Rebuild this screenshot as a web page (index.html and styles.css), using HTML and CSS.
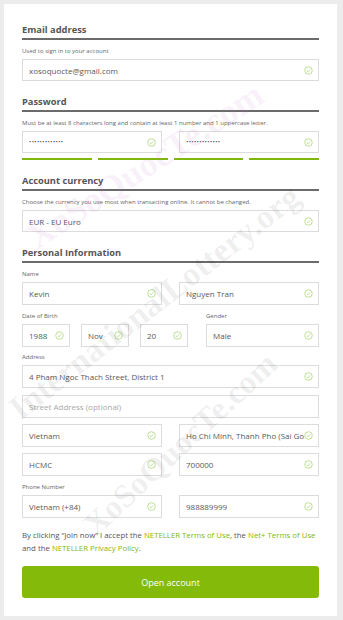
FILE: index.html
```html
<!DOCTYPE html>
<html lang="en">
<head>
<meta charset="utf-8">
<title>Open account</title>
<link rel="stylesheet" href="styles.css">
</head>
<body>
<main class="card">
  <section class="sec">
    <h2 class="sec-title">Email address</h2>
    <p class="hint">Used to sign in to your account</p>
    <div class="field"><input class="fi" type="text" value="xosoquocte@gmail.com" readonly><svg class="ok" viewBox="0 0 10 10"><circle cx="5" cy="5" r="4.2"/><path d="M3.1 5.1 4.5 6.4 6.9 3.8"/></svg></div>
  </section>

  <section class="sec">
    <h2 class="sec-title">Password</h2>
    <p class="hint">Must be at least 8 characters long and contain at least 1 number and 1 uppercase letter.</p>
    <div class="row2">
      <div class="field"><input class="fi pw" type="password" value="aaaaaaaaaaaaa" readonly><svg class="ok" viewBox="0 0 10 10"><circle cx="5" cy="5" r="4.2"/><path d="M3.1 5.1 4.5 6.4 6.9 3.8"/></svg></div>
      <div class="field"><input class="fi pw" type="password" value="aaaaaaaaaaaaa" readonly><svg class="ok" viewBox="0 0 10 10"><circle cx="5" cy="5" r="4.2"/><path d="M3.1 5.1 4.5 6.4 6.9 3.8"/></svg></div>
    </div>
    <div class="strength"><span></span><span></span><span></span><span></span></div>
  </section>

  <section class="sec">
    <h2 class="sec-title">Account currency</h2>
    <p class="hint">Choose the currency you use most when transacting online. It cannot be changed.</p>
    <div class="field"><input class="fi" type="text" value="EUR - EU Euro" readonly><svg class="ok" viewBox="0 0 10 10"><circle cx="5" cy="5" r="4.2"/><path d="M3.1 5.1 4.5 6.4 6.9 3.8"/></svg></div>
  </section>

  <section class="sec personal">
    <h2 class="sec-title">Personal Information</h2>

    <p class="lbl">Name</p>
    <div class="row2">
      <div class="field tall"><input class="fi" type="text" value="Kevin" readonly><svg class="ok" viewBox="0 0 10 10"><circle cx="5" cy="5" r="4.2"/><path d="M3.1 5.1 4.5 6.4 6.9 3.8"/></svg></div>
      <div class="field tall"><input class="fi" type="text" value="Nguyen Tran" readonly><svg class="ok" viewBox="0 0 10 10"><circle cx="5" cy="5" r="4.2"/><path d="M3.1 5.1 4.5 6.4 6.9 3.8"/></svg></div>
    </div>

    <div class="dob">
      <p class="lbl dob-l">Date of Birth</p>
      <p class="lbl gen-l">Gender</p>
      <div class="field tall"><input class="fi" type="text" value="1988" readonly><svg class="ok" viewBox="0 0 10 10"><circle cx="5" cy="5" r="4.2"/><path d="M3.1 5.1 4.5 6.4 6.9 3.8"/></svg></div>
      <div class="field tall"><input class="fi" type="text" value="Nov" readonly><svg class="ok" viewBox="0 0 10 10"><circle cx="5" cy="5" r="4.2"/><path d="M3.1 5.1 4.5 6.4 6.9 3.8"/></svg></div>
      <div class="field tall"><input class="fi" type="text" value="20" readonly><svg class="ok" viewBox="0 0 10 10"><circle cx="5" cy="5" r="4.2"/><path d="M3.1 5.1 4.5 6.4 6.9 3.8"/></svg></div>
      <div class="field tall gen"><input class="fi" type="text" value="Male" readonly><svg class="ok" viewBox="0 0 10 10"><circle cx="5" cy="5" r="4.2"/><path d="M3.1 5.1 4.5 6.4 6.9 3.8"/></svg></div>
    </div>

    <p class="lbl addr-l">Address</p>
    <div class="field tall"><input class="fi" type="text" value="4 Pham Ngoc Thach Street, District 1" readonly><svg class="ok" viewBox="0 0 10 10"><circle cx="5" cy="5" r="4.2"/><path d="M3.1 5.1 4.5 6.4 6.9 3.8"/></svg></div>
    <div class="field tall gap7"><input class="fi" type="text" placeholder="Street Address (optional)" readonly></div>
    <div class="row2 gap6">
      <div class="field tall"><input class="fi" type="text" value="Vietnam" readonly><svg class="ok" viewBox="0 0 10 10"><circle cx="5" cy="5" r="4.2"/><path d="M3.1 5.1 4.5 6.4 6.9 3.8"/></svg></div>
      <div class="field tall"><input class="fi" type="text" value="Ho Chi Minh, Thanh Pho (Sai Gon)" readonly><svg class="ok" viewBox="0 0 10 10"><circle cx="5" cy="5" r="4.2"/><path d="M3.1 5.1 4.5 6.4 6.9 3.8"/></svg></div>
    </div>
    <div class="row2 gap6">
      <div class="field tall"><input class="fi" type="text" value="HCMC" readonly><svg class="ok" viewBox="0 0 10 10"><circle cx="5" cy="5" r="4.2"/><path d="M3.1 5.1 4.5 6.4 6.9 3.8"/></svg></div>
      <div class="field tall"><input class="fi" type="text" value="700000" readonly><svg class="ok" viewBox="0 0 10 10"><circle cx="5" cy="5" r="4.2"/><path d="M3.1 5.1 4.5 6.4 6.9 3.8"/></svg></div>
    </div>

    <p class="lbl phone-l">Phone Number</p>
    <div class="row2">
      <div class="field tall"><input class="fi" type="text" value="Vietnam (+84)" readonly><svg class="ok" viewBox="0 0 10 10"><circle cx="5" cy="5" r="4.2"/><path d="M3.1 5.1 4.5 6.4 6.9 3.8"/></svg></div>
      <div class="field tall"><input class="fi" type="text" value="988889999" readonly><svg class="ok" viewBox="0 0 10 10"><circle cx="5" cy="5" r="4.2"/><path d="M3.1 5.1 4.5 6.4 6.9 3.8"/></svg></div>
    </div>
  </section>

  <p class="terms">By clicking “Join now” I accept the <a href="#">NETELLER Terms of Use</a>, the <a href="#">Net+ Terms of Use</a> and the <a href="#">NETELLER Privacy Policy</a>.</p>

  <button class="btn" type="button">Open account</button>

  <div class="wm wm1">XoSoQuocTe.com</div>
  <div class="wm wm2">InternationalLottery.org</div>
  <div class="wm wm3">XoSoQuocTe.com</div>
</main>
</body>
</html>
```

FILE: styles.css
```css
* { box-sizing: border-box; }

html, body {
  margin: 0;
  padding: 0;
  background: #ececec;
}

body {
  padding: 4px 6px 3px 4px;
  font-family: "Open Sans", "Liberation Sans", sans-serif;
  color: #555;
}

.card {
  position: relative;
  overflow: hidden;
  background: #fff;
  padding: 18px 18px 18px 18px;
}

.sec { margin: 0 0 13px 0; }

.sec-title {
  margin: 0;
  font-size: 9.3px;
  font-weight: 700;
  line-height: 15px;
  color: #555;
  padding-bottom: 1px;
  border-bottom: 2px solid #6b6b6b;
}

.hint, .lbl {
  margin: 6px 0 0 0;
  font-size: 6px;
  line-height: 10px;
  color: #666;
}

.field {
  margin-top: 3px;
  height: 22px;
  display: flex;
  align-items: center;
  border: 1px solid #dcdcdc;
  background: #fff;
  padding: 0 5px 0 0;
  min-width: 0;
}

.field.tall { height: 23px; }

.fi {
  flex: 1 1 auto;
  min-width: 0;
  width: 100%;
  height: 100%;
  border: 0;
  outline: 0;
  background: transparent;
  padding: 0 0 0 6px;
  margin: 0;
  font-family: "Open Sans", "Liberation Sans", sans-serif;
  font-size: 8px;
  color: #595959;
}

.fi::placeholder { color: #a8a8a8; }

.fi.pw { font-size: 6px; letter-spacing: 0.4px; color: #555; }

.ok {
  flex: 0 0 9px;
  width: 9px;
  height: 9px;
  fill: none;
  stroke: #a6d46c;
  stroke-width: 0.8;
}

.row2 {
  display: grid;
  grid-template-columns: 1fr 1fr;
  column-gap: 17px;
}

.strength {
  margin-top: 5px;
  display: grid;
  grid-template-columns: repeat(4, 1fr);
  column-gap: 6px;
}
.strength span {
  height: 2px;
  background: #7fb80a;
}

.personal { margin-bottom: 0; }

.dob {
  margin-top: 0;
  display: grid;
  grid-template-columns: 48px 48px 48px 1fr;
  column-gap: 11px;
}
.dob-l { grid-column: 1 / 4; }
.gen-l { grid-column: 4; margin-left: 7px; }
.gen { margin-left: 7px; }

.addr-l { margin-top: 5px; }
.gap7 { margin-top: 7px; }
.row2.gap6 { margin-top: 3px; }

.terms {
  margin: 11px 0 0 0;
  font-size: 7.8px;
  line-height: 13px;
  color: #555;
}
.terms a { color: #7fb80a; text-decoration: none; }

.btn {
  display: block;
  width: 100%;
  height: 32px;
  margin-top: 11px;
  border: 0;
  border-radius: 3px;
  background: #84bb0b;
  color: #fff;
  font-family: "Open Sans", "Liberation Sans", sans-serif;
  font-size: 9px;
}

.wm {
  position: absolute;
  font-family: "Liberation Serif", "DejaVu Serif", serif;
  font-weight: 700;
  white-space: nowrap;
  pointer-events: none;
  transform-origin: 0 100%;
  line-height: 1;
}
.wm1 { left: 36px; top: 215px; font-size: 36px; transform: rotate(-33deg); color: rgba(200, 110, 200, 0.10); }
.wm2 { left: 20px; top: 388px; font-size: 34px; transform: rotate(-38deg); color: rgba(0, 0, 0, 0.07); }
.wm3 { left: 96px; top: 505px; font-size: 33px; transform: rotate(-43deg); color: rgba(0, 0, 0, 0.07); }
```
